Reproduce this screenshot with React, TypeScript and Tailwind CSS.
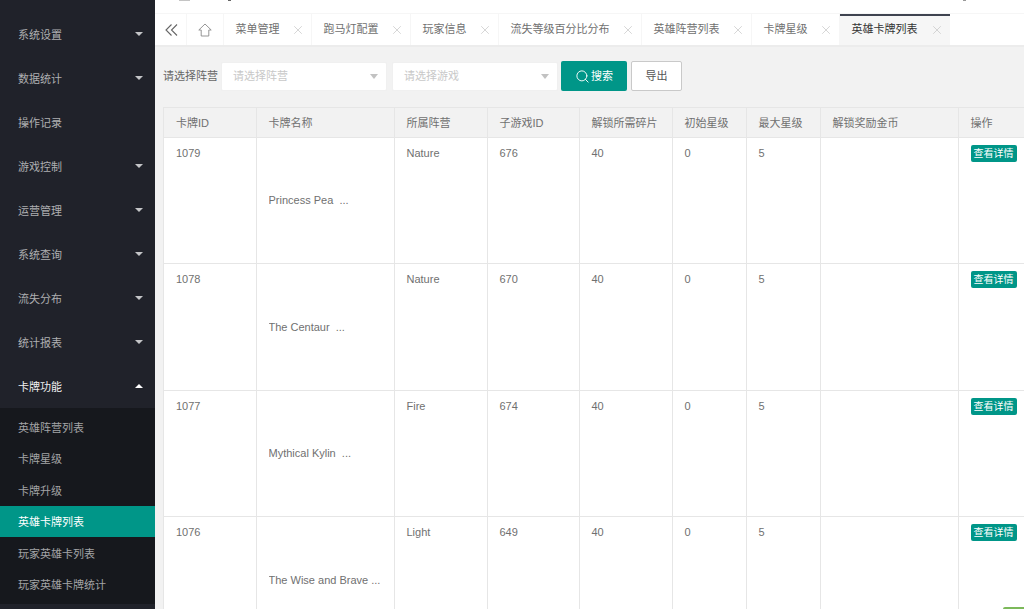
import { Search, X } from 'lucide-react'

const menus = [
  { label: '系统设置', arrow: true },
  { label: '数据统计', arrow: true },
  { label: '操作记录', arrow: false },
  { label: '游戏控制', arrow: true },
  { label: '运营管理', arrow: true },
  { label: '系统查询', arrow: true },
  { label: '流失分布', arrow: true },
  { label: '统计报表', arrow: true },
]

const subMenus = ['英雄阵营列表', '卡牌星级', '卡牌升级', '英雄卡牌列表', '玩家英雄卡列表', '玩家英雄卡牌统计']

const tabs = [
  { label: '菜单管理', width: 'w-[88px]' },
  { label: '跑马灯配置', width: 'w-[99px]' },
  { label: '玩家信息', width: 'w-[88px]' },
  { label: '流失等级百分比分布', width: 'w-[143px]' },
  { label: '英雄阵营列表', width: 'w-[110px]' },
  { label: '卡牌星级', width: 'w-[88px]' },
]

const columns = ['卡牌ID', '卡牌名称', '所属阵营', '子游戏ID', '解锁所需碎片', '初始星级', '最大星级', '解锁奖励金币', '操作']

const rows = [
  { id: 1079, name: 'Princess Pea  ...', camp: 'Nature', game: 676 },
  { id: 1078, name: 'The Centaur  ...', camp: 'Nature', game: 670 },
  { id: 1077, name: 'Mythical Kylin  ...', camp: 'Fire', game: 674 },
  { id: 1076, name: 'The Wise and Brave ...', camp: 'Light', game: 649 },
]

function Caret({ up = false }: { up?: boolean }) {
  return up ? (
    <span className="h-0 w-0 border-x-[4.5px] border-b-[4.5px] border-x-transparent border-b-white" />
  ) : (
    <span className="h-0 w-0 border-x-[4.5px] border-t-[4.5px] border-x-transparent border-t-[#c4c5c7]" />
  )
}

function Sidebar() {
  return (
    <aside className="flex h-full w-[155px] shrink-0 flex-col bg-[#20222a] pt-3">
      {menus.map((m) => (
        <div key={m.label} className="flex h-11 shrink-0 items-center justify-between pl-[18px] pr-3 text-[#aeafb1]">
          <span className="pt-[2px]">{m.label}</span>
          {m.arrow && <Caret />}
        </div>
      ))}
      <div className="flex h-11 shrink-0 items-center justify-between pl-[18px] pr-3 text-[#f0f0f0]">
        <span className="pt-[2px]">卡牌功能</span>
        <Caret up />
      </div>
      <div className="flex flex-col bg-[#16181d] pb-1 pt-[3.5px]">
        {subMenus.map((s) => (
          <div
            key={s}
            className={
              s === '英雄卡牌列表'
                ? 'flex h-[31.4px] items-center bg-[#009688] pl-[18px] pt-[2px] text-white'
                : 'flex h-[31.4px] items-center pl-[18px] pt-[2px] text-[#a3a4a6]'
            }
          >
            {s}
          </div>
        ))}
      </div>
    </aside>
  )
}

function Tab({ label, width, active = false }: { label: string; width: string; active?: boolean }) {
  return (
    <div
      className={
        active
          ? `relative flex h-full ${width} items-center justify-between border-t-2 border-[#3f4350] bg-[#f6f6f6] pb-0.5 pl-3 pr-[6px] text-[#333]`
          : `flex h-full ${width} items-center justify-between border-r border-[#f6f6f6] pl-3 pr-[6px] text-[#707070]`
      }
    >
      <span>{label}</span>
      <X size={14} strokeWidth={1.2} className="text-[#c4c4c4]" />
    </div>
  )
}

function TabBar() {
  return (
    <div className="flex h-[34px] shrink-0 border-b-2 border-[#ececec] border-t border-t-[#f6f6f6] bg-white">
      <div className="flex h-full w-[31.5px] items-center justify-center border-r border-[#f6f6f6] pl-[3px]">
        <svg width="14" height="14" viewBox="0 0 14 14" fill="none" stroke="#666" strokeWidth="1.1">
          <path d="M6.5 1.5 1 7l5.5 5.5M12 1.5 6.5 7l5.5 5.5" />
        </svg>
      </div>
      <div className="flex h-full w-[37px] items-center justify-center border-r border-[#f6f6f6]">
        <svg width="14" height="14" viewBox="0 0 14 14" fill="none" stroke="#8a8a8a" strokeWidth="0.9">
          <path d="M7 1 .8 7h2.4v6h7.6V7h2.4L7 1Z" />
        </svg>
      </div>
      {tabs.map((t) => (
        <Tab key={t.label} label={t.label} width={t.width} />
      ))}
      <Tab label="英雄卡牌列表" width="w-[110px]" active />
    </div>
  )
}

function SelectBox({ placeholder }: { placeholder: string }) {
  return (
    <div className="flex h-[29px] w-[166px] items-center justify-between rounded-[2px] border border-[#f0f0f0] bg-white pl-[11px] pr-[8px] text-[#c8c8c8]">
      <span>{placeholder}</span>
      <span className="h-0 w-0 border-x-[4.5px] border-t-[5px] border-x-transparent border-t-[#c2c2c2]" />
    </div>
  )
}

function Filters() {
  return (
    <div className="flex h-[60px] shrink-0 items-center pl-2 pb-[2px]">
      <span className="mr-[3px] w-[55px] text-[#666]">请选择阵营</span>
      <SelectBox placeholder="请选择阵营" />
      <div className="w-[5px]" />
      <SelectBox placeholder="请选择游戏" />
      <button className="ml-[3px] flex h-[30px] w-[66px] items-center justify-center gap-px rounded-[2px] bg-[#009688] text-white">
        <Search size={15} strokeWidth={1.5} />
        <span>搜索</span>
      </button>
      <button className="ml-1 h-[30px] w-[51px] rounded-[2px] border border-[#c9c9c9] bg-white text-[#555]">导出</button>
    </div>
  )
}

function CardTable() {
  return (
    <div className="ml-2 overflow-hidden">
      <table className="w-[894.5px] table-fixed border-collapse border-t border-l border-[#e6e6e6] bg-white text-left text-[#707070]">
        <colgroup>
          <col className="w-[92.5px]" />
          <col className="w-[138px]" />
          <col className="w-[93px]" />
          <col className="w-[92px]" />
          <col className="w-[93px]" />
          <col className="w-[74px]" />
          <col className="w-[74px]" />
          <col className="w-[138px]" />
          <col className="w-[100px]" />
        </colgroup>
        <thead>
          <tr className="h-[30px] bg-[#f2f2f2]">
            {columns.map((c) => (
              <th key={c} className="border border-[#e6e6e6] px-3 pt-px font-normal">
                {c}
              </th>
            ))}
          </tr>
        </thead>
        <tbody>
          {rows.map((r) => (
            <tr key={r.id} className="h-[126.4px] align-top">
              <td className="border border-[#e6e6e6] px-3 pt-[7px]">{r.id}</td>
              <td className="border border-[#e6e6e6] px-3 align-middle">
                <div className="truncate whitespace-pre">{r.name}</div>
              </td>
              <td className="border border-[#e6e6e6] px-3 pt-[7px]">{r.camp}</td>
              <td className="border border-[#e6e6e6] px-3 pt-[7px]">{r.game}</td>
              <td className="border border-[#e6e6e6] px-3 pt-[7px]">40</td>
              <td className="border border-[#e6e6e6] px-3 pt-[7px]">0</td>
              <td className="border border-[#e6e6e6] px-3 pt-[7px]">5</td>
              <td className="border border-[#e6e6e6] px-3 pt-[7px]"></td>
              <td className="border border-[#e6e6e6] pl-3 pt-[7px]">
                <span className="flex h-[17px] w-[46px] items-center justify-center rounded-[2px] bg-[#009688] text-[10px] text-white">
                  查看详情
                </span>
              </td>
            </tr>
          ))}
        </tbody>
      </table>
    </div>
  )
}

export default function App() {
  return (
    <div className="relative flex h-[609px] w-[1024px] overflow-hidden bg-white font-['Liberation_Sans','Noto_Sans_CJK_SC',sans-serif] text-[11px]">
      <Sidebar />
      <main className="flex min-w-0 flex-1 flex-col bg-[#f2f2f2]">
        <div className="h-[13px] shrink-0 bg-white" />
        <TabBar />
        <Filters />
        <CardTable />
      </main>
      <span className="absolute left-[179px] top-0 h-px w-[11px] bg-[#c4c4c4]" />
      <span className="absolute left-[228px] top-0 h-px w-[3px] bg-[#666]" />
      <span className="absolute left-[963px] top-0 h-px w-[3px] bg-[#999]" />
      <span className="absolute bottom-0 right-0 h-[2px] w-[21px] rounded-tl-[2px] bg-[#7cb95a]" />
    </div>
  )
}
